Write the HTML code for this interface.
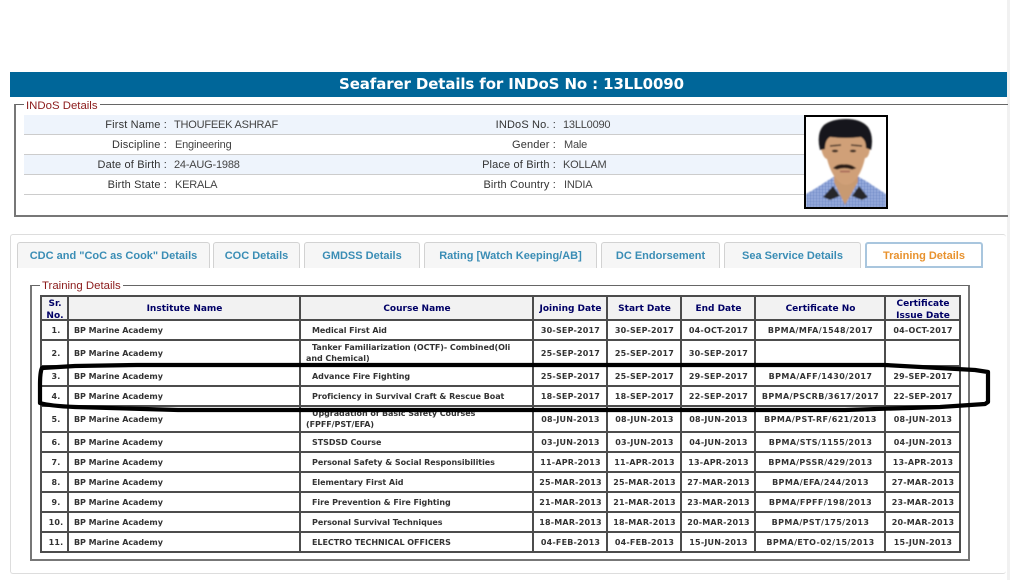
<!DOCTYPE html>
<html><head><meta charset="utf-8"><style>
html,body{margin:0;padding:0;background:#fff;width:1010px;height:580px;overflow:hidden}
body{position:relative;font-family:"Liberation Sans",sans-serif}
.a{position:absolute}
#bar{left:10px;top:72px;width:991px;padding-left:6px;height:25px;background:#006699;color:#fff;font:bold 15px/25px "DejaVu Sans",sans-serif;letter-spacing:-.12px;text-align:center;white-space:nowrap}
.fs{position:absolute;box-sizing:border-box;border:2px solid #777;border-top-width:1px;border-top-color:#666}
.lg{position:absolute;background:#fff;color:#8b1a1a;font-size:11.4px;line-height:14px;padding:0 2px;white-space:nowrap;margin-top:1px}
.r{position:absolute;left:24px;width:780px;height:19px;border-bottom:1px solid #ccc}
.r.o{background:#eef4fc}
.l,.v{position:absolute;font-size:11px;line-height:14px;white-space:nowrap;margin-top:1px}
.l{color:#333;text-align:right;letter-spacing:.15px}
.v{color:#444;letter-spacing:-.2px}
.tab{position:absolute;top:242px;height:26px;box-sizing:border-box;background:#f6f6f6;border:1px solid #d2d2d2;border-bottom:0;border-radius:3px 3px 0 0;color:#3a8db5;text-align:center;white-space:nowrap}
.tab span{font:bold 11px/26px "Liberation Sans",sans-serif}
table{position:absolute;left:40px;top:295px;width:920px;border-collapse:collapse;table-layout:fixed;font:bold 8px/11px "DejaVu Sans",sans-serif;color:#333}
td,th{border:2px solid #4c4c4c;padding:0;text-align:center;overflow:hidden;letter-spacing:.2px;background:#fff;white-space:nowrap}
td{padding-left:1px}
th{background:#f2f2f2;color:#000066;font-size:9px;line-height:11px;letter-spacing:0;padding-top:2px;padding-left:1px}
th div{margin:-1px 0 -3px;line-height:12px}
td.n{padding-left:3px}
td.i{text-align:left;padding-left:5px;letter-spacing:-.05px}
td.c{text-align:left;padding-left:11px;letter-spacing:-.05px}
td.w{white-space:normal;padding-left:5px;text-align:left;letter-spacing:-.05px}
td.w b{display:block;padding-left:6px}
td.x{letter-spacing:.4px}
</style></head><body>
<div class="a" style="left:1007px;top:0;width:3px;height:580px;background:#f1f1f1"></div>
<div class="a" id="bar">Seafarer Details for INDoS No : 13LL0090</div>

<div class="fs" style="left:14px;top:104px;width:994px;height:113px;border-right:0"></div>
<div class="lg" style="left:24px;top:98px">INDoS Details</div>
<div class="r o" style="top:115px"></div>
<div class="r" style="top:135px"></div>
<div class="r o" style="top:155px"></div>
<div class="r" style="top:175px"></div>

<div class="l" style="right:843px;top:117px">First Name :</div><div class="v" style="left:174px;top:117px">THOUFEEK ASHRAF</div>
<div class="l" style="right:843px;top:137px">Discipline :</div><div class="v" style="left:175px;top:137px">Engineering</div>
<div class="l" style="right:843px;top:157px">Date of Birth :</div><div class="v" style="left:174px;top:157px">24-AUG-1988</div>
<div class="l" style="right:843px;top:177px">Birth State :</div><div class="v" style="left:175px;top:177px">KERALA</div>
<div class="l" style="right:454px;top:117px">INDoS No. :</div><div class="v" style="left:563px;top:117px">13LL0090</div>
<div class="l" style="right:454px;top:137px">Gender :</div><div class="v" style="left:564px;top:137px">Male</div>
<div class="l" style="right:454px;top:157px">Place of Birth :</div><div class="v" style="left:563px;top:157px">KOLLAM</div>
<div class="l" style="right:454px;top:177px">Birth Country :</div><div class="v" style="left:564px;top:177px">INDIA</div>

<div class="a" style="left:10px;top:234px;width:996px;height:340px;box-sizing:border-box;border:1px solid #ddd;border-right:0;border-radius:3px"></div>
<div class="tab" style="left:17px;width:193px"><span>CDC and "CoC as Cook" Details</span></div>
<div class="tab" style="left:213px;width:87px"><span>COC Details</span></div>
<div class="tab" style="left:304px;width:116px"><span>GMDSS Details</span></div>
<div class="tab" style="left:424px;width:173px"><span>Rating [Watch Keeping/AB]</span></div>
<div class="tab" style="left:601px;width:119px"><span>DC Endorsement</span></div>
<div class="tab" style="left:724px;width:137px"><span>Sea Service Details</span></div>
<div class="tab" style="left:865px;width:118px;background:#fff;border:2px solid #a9c6de;color:#e8922e"><span style="line-height:24px">Training Details</span></div>

<div class="fs" style="left:30px;top:285px;width:940px;height:276px"></div>
<div class="lg" style="left:40px;top:278px">Training Details</div>

<table>
<colgroup><col style="width:27px"><col style="width:232px"><col style="width:233px"><col style="width:74px"><col style="width:74px"><col style="width:74px"><col style="width:130px"><col style="width:75px"></colgroup>
<tr style="height:24px"><th><div>Sr.<br>No.</div></th><th>Institute Name</th><th>Course Name</th><th>Joining Date</th><th>Start Date</th><th>End Date</th><th>Certificate No</th><th><div>Certificate<br>Issue Date</div></th></tr>
<tr style="height:20px"><td class="n">1.</td><td class="i">BP Marine Academy</td><td class="c">Medical First Aid</td><td>30-SEP-2017</td><td>30-SEP-2017</td><td>04-OCT-2017</td><td class="x">BPMA/MFA/1548/2017</td><td>04-OCT-2017</td></tr>
<tr style="height:26px"><td class="n">2.</td><td class="i">BP Marine Academy</td><td class="w"><b>Tanker Familiarization (OCTF)- Combined(Oli</b>and Chemical)</td><td>25-SEP-2017</td><td>25-SEP-2017</td><td>30-SEP-2017</td><td></td><td></td></tr>
<tr style="height:20px"><td class="n">3.</td><td class="i">BP Marine Academy</td><td class="c">Advance Fire Fighting</td><td>25-SEP-2017</td><td>25-SEP-2017</td><td>29-SEP-2017</td><td class="x">BPMA/AFF/1430/2017</td><td>29-SEP-2017</td></tr>
<tr style="height:20px"><td class="n">4.</td><td class="i">BP Marine Academy</td><td class="c">Proficiency in Survival Craft &amp; Rescue Boat</td><td>18-SEP-2017</td><td>18-SEP-2017</td><td>22-SEP-2017</td><td class="x">BPMA/PSCRB/3617/2017</td><td>22-SEP-2017</td></tr>
<tr style="height:26px"><td class="n">5.</td><td class="i">BP Marine Academy</td><td class="w"><b>Upgradation of Basic Safety Courses</b>(FPFF/PST/EFA)</td><td>08-JUN-2013</td><td>08-JUN-2013</td><td>08-JUN-2013</td><td class="x">BPMA/PST-RF/621/2013</td><td>08-JUN-2013</td></tr>
<tr style="height:20px"><td class="n">6.</td><td class="i">BP Marine Academy</td><td class="c">STSDSD Course</td><td>03-JUN-2013</td><td>03-JUN-2013</td><td>04-JUN-2013</td><td class="x">BPMA/STS/1155/2013</td><td>04-JUN-2013</td></tr>
<tr style="height:20px"><td class="n">7.</td><td class="i">BP Marine Academy</td><td class="c">Personal Safety &amp; Social Responsibilities</td><td>11-APR-2013</td><td>11-APR-2013</td><td>13-APR-2013</td><td class="x">BPMA/PSSR/429/2013</td><td>13-APR-2013</td></tr>
<tr style="height:20px"><td class="n">8.</td><td class="i">BP Marine Academy</td><td class="c">Elementary First Aid</td><td>25-MAR-2013</td><td>25-MAR-2013</td><td>27-MAR-2013</td><td class="x">BPMA/EFA/244/2013</td><td>27-MAR-2013</td></tr>
<tr style="height:20px"><td class="n">9.</td><td class="i">BP Marine Academy</td><td class="c">Fire Prevention &amp; Fire Fighting</td><td>21-MAR-2013</td><td>21-MAR-2013</td><td>23-MAR-2013</td><td class="x">BPMA/FPFF/198/2013</td><td>23-MAR-2013</td></tr>
<tr style="height:20px"><td class="n">10.</td><td class="i">BP Marine Academy</td><td class="c">Personal Survival Techniques</td><td>18-MAR-2013</td><td>18-MAR-2013</td><td>20-MAR-2013</td><td class="x">BPMA/PST/175/2013</td><td>20-MAR-2013</td></tr>
<tr style="height:20px"><td class="n">11.</td><td class="i">BP Marine Academy</td><td class="c">ELECTRO TECHNICAL OFFICERS</td><td>04-FEB-2013</td><td>04-FEB-2013</td><td>15-JUN-2013</td><td class="x">BPMA/ETO-02/15/2013</td><td>15-JUN-2013</td></tr>
</table>

<svg class="a" style="left:0;top:0" width="1010" height="580" viewBox="0 0 1010 580">
<defs>
<filter id="b"><feGaussianBlur stdDeviation=".8"/></filter>
<pattern id="ck" width="3" height="3" patternUnits="userSpaceOnUse"><rect width="3" height="3" fill="#a9bce6"/><rect width="1" height="3" fill="#5f7cc0"/><rect width="3" height="1" fill="#7089c8"/></pattern>
<clipPath id="pc"><rect x="805" y="116" width="82" height="92"/></clipPath>
</defs>
<g clip-path="url(#pc)">
<rect x="804" y="115" width="84" height="94" fill="#fff"/>
<g filter="url(#b)">
<path d="M806 208V194Q815 189 827 181L835 176H857L866 181Q878 189 886 194V208Z" fill="url(#ck)"/>
<path d="M834 172H858V182L845 205L834 182Z" fill="#c89a72"/>
<path d="M823 197L833 186L840 196L830 200Z M868 197L859 186L852 196L862 200Z" fill="#26262c"/>
<path d="M825 140Q821 138 821 148Q823 158 827 159Q832 178 842 184Q847 186 852 183Q861 176 865 158Q869 158 870 148Q870 138 866 140L860 130H832Z" fill="#d0a078"/>
<path d="M820 150Q816 133 824 125Q832 119 846 119Q861 119 868 127Q874 136 871 150L866 148Q866 140 861 137Q846 139 830 137Q825 140 825 149Z" fill="#14141a"/>
<path d="M830 146L841 145M851 145L862 146" stroke="#3a2a22" stroke-width="1.6" fill="none"/>
<ellipse cx="835" cy="151" rx="3.2" ry="1.4" fill="#3a2a24"/><ellipse cx="853" cy="151" rx="3.2" ry="1.4" fill="#3a2a24"/>
<path d="M834 168Q838 164 844 165Q850 164 855 168L852 169Q844 166 837 169Z" fill="#2a1c18" stroke="#2a1c18" stroke-width="1.2"/>
<path d="M840 171.5H850" stroke="#a86a58" stroke-width="1.8"/>
</g>
</g>
<rect x="805" y="116" width="82" height="92" fill="none" stroke="#000" stroke-width="2"/>
<path d="M137 365L75 366L42 368Q40 372 40 385L40 403Q50 406 75 407L178 410L505 410L845 410L940 407L985 404L988 402L988 372L975 370L885 365L505 365L137 365" fill="none" stroke="#000" stroke-width="4.2" stroke-linejoin="round" stroke-linecap="round"/>
</svg>
</body></html>
